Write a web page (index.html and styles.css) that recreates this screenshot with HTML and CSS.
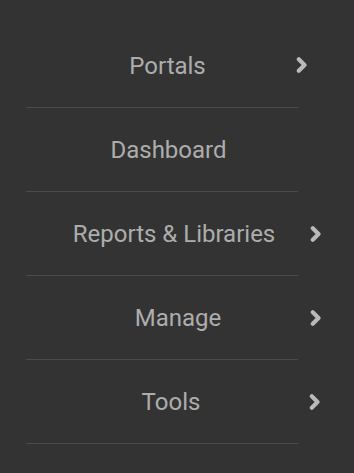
FILE: index.html
```html
<!DOCTYPE html>
<html lang="en">
<head>
  <meta charset="UTF-8">
  <meta name="viewport" content="width=device-width, initial-scale=1.0">
  <title>Menu</title>
  <link rel="stylesheet" href="styles.css">
</head>
<body>
  <nav class="menu">
    <a class="menu-item" href="#">
      <span class="label label-portals">Portals</span>
      <svg class="chevron chevron-portals" viewBox="0 0 10 14"><path d="M2.2 2 L7.2 7 L2.2 12" /></svg>
    </a>
    <a class="menu-item" href="#">
      <span class="label label-dashboard">Dashboard</span>
    </a>
    <a class="menu-item" href="#">
      <span class="label label-reports">Reports &amp; Libraries</span>
      <svg class="chevron" viewBox="0 0 10 14"><path d="M2.2 2 L7.2 7 L2.2 12" /></svg>
    </a>
    <a class="menu-item" href="#">
      <span class="label label-manage">Manage</span>
      <svg class="chevron" viewBox="0 0 10 14"><path d="M2.2 2 L7.2 7 L2.2 12" /></svg>
    </a>
    <a class="menu-item" href="#">
      <span class="label label-tools">Tools</span>
      <svg class="chevron chevron-tools" viewBox="0 0 10 14"><path d="M2.2 2 L7.2 7 L2.2 12" /></svg>
    </a>
  </nav>
</body>
</html>
```

FILE: styles.css
```css
html, body {
  margin: 0;
  padding: 0;
  height: 100%;
  background-color: #333333;
}

body {
  font-family: Roboto, "Liberation Sans", sans-serif;
}

.menu {
  padding-top: 24px;
  display: flex;
  flex-direction: column;
}

.menu-item {
  position: relative;
  display: flex;
  justify-content: center;
  align-items: center;
  height: 83px;
  margin: 0 56px 0 26px;
  border-bottom: 1px solid #4b4b4b;
  color: #adadad;
  text-decoration: none;
  font-size: 24px;
}

.label-portals { margin-left: 11px; }
.label-dashboard { margin-left: 13px; }
.label-reports { margin-left: 24px; }
.label-manage { margin-left: 32px; }
.label-tools { margin-left: 18px; }

.chevron {
  position: absolute;
  right: -24px;
  top: 50%;
  width: 12px;
  height: 16px;
  margin-top: -8px;
  fill: none;
  stroke: #bababa;
  stroke-width: 3.6;
  stroke-linecap: round;
  stroke-linejoin: round;
}

.chevron-portals {
  right: -10px;
  margin-top: -9px;
}

.chevron-tools {
  right: -23px;
}
```
